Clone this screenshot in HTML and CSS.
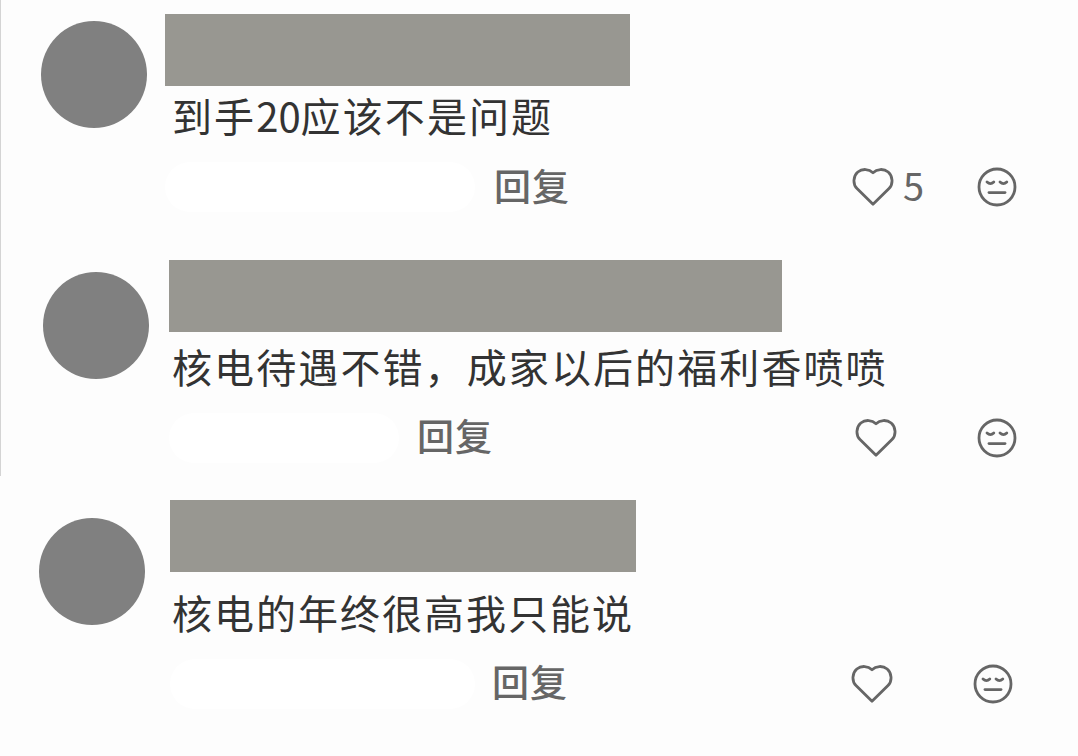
FILE: index.html
```html
<!DOCTYPE html>
<html lang="zh-CN">
<head>
    <meta charset="UTF-8">
    <title>评论</title>
    <link rel="stylesheet" href="styles.css">
</head>
<body>
    <!-- shared icons -->
    <svg class="sprite">
        <symbol id="heart" viewBox="0 0 42 38">
            <path d="M21 36.300L5 20.600C.5 16 1.200 8 5.800 4C10.500.3 17 .9 21 4.800C25 .9 31.500.3 36.200 4C40.800 8 41.500 16 37 20.600Z"/>
        </symbol>
        <symbol id="face" viewBox="0 0 40 40">
            <circle cx="20" cy="20" r="18"/>
            <path d="M10 15Q13.400 18.200 16.800 15M23 15Q26.400 18.200 29.800 15"/>
            <path d="M12 25.600H28"/>
        </symbol>
    </svg>

    <div class="comments">
        <div class="comment first">
            <div class="avatar"></div>
            <div class="content">
                <div class="name"></div>
                <p class="text">到手<span class="num">20</span>应该不是问题</p>
                <div class="actions">
                    <span class="time"></span>
                    <span class="reply">回复</span>
                    <span class="like"><svg class="heart"><use href="#heart"/></svg><span class="count">5</span></span>
                    <svg class="face"><use href="#face"/></svg>
                </div>
            </div>
        </div>

        <div class="comment second">
            <div class="avatar"></div>
            <div class="content">
                <div class="name"></div>
                <p class="text">核电待遇不错，成家以后的福利香喷喷</p>
                <div class="actions">
                    <span class="time"></span>
                    <span class="reply">回复</span>
                    <span class="like"><svg class="heart"><use href="#heart"/></svg></span>
                    <svg class="face"><use href="#face"/></svg>
                </div>
            </div>
        </div>

        <div class="comment third">
            <div class="avatar"></div>
            <div class="content">
                <div class="name"></div>
                <p class="text">核电的年终很高我只能说</p>
                <div class="actions">
                    <span class="time"></span>
                    <span class="reply">回复</span>
                    <span class="like"><svg class="heart"><use href="#heart"/></svg></span>
                    <svg class="face"><use href="#face"/></svg>
                </div>
            </div>
        </div>
    </div>
</body>
</html>
```
FILE: styles.css
```css
* {
    box-sizing: border-box;
}
body {
    margin: 0;
    background-color: #fdfdfd;
    font-family: "Noto Sans CJK SC", sans-serif;
    overflow: hidden;
}
.sprite {
    display: none;
}
.comments {
    width: 1078px;
    height: 756px;
    background: linear-gradient(#d4d4d4, #d4d4d4) no-repeat 0 0 / 1px 476px;
}
.comment {
    display: flex;
    align-items: flex-start;
}
.first {
    height: 251px;
    padding: 14px 0 0 41px;
}
.second {
    height: 246px;
    padding: 9px 0 0 43px;
}
.third {
    padding: 3px 0 0 39px;
}
.avatar {
    flex: none;
    width: 106px;
    height: 107px;
    margin-top: 7px;
    border-radius: 50%;
    background-color: #808080;
}
.second .avatar {
    margin-top: 12px;
}
.third .avatar {
    margin-top: 18px;
}
.content {
    flex: 1;
    padding-left: 18px;
}
.second .content {
    padding-left: 20px;
}
.third .content {
    padding-left: 25px;
}
.name {
    width: 465px;
    height: 72px;
    background-color: #989791;
}
.second .name {
    width: 613px;
}
.third .name {
    width: 466px;
}
.text {
    margin: 0 0 0 7px;
    height: 60px;
    line-height: 58px;
    font-size: 40px;
    letter-spacing: 2.1px;
    color: #333;
    white-space: nowrap;
}
.second .text {
    margin: 5px 0 0 3px;
}
.third .text {
    margin: 11px 0 0 2px;
    letter-spacing: 2px;
}
.num {
    letter-spacing: 0;
}

/* bottom row */
.actions {
    display: flex;
    align-items: center;
    height: 58px;
    margin-top: 12px;
    color: #666;
}
.second .actions, .third .actions {
    height: 57px;
}
.time {
    width: 310px;
    height: 50px;
    border-radius: 25px;
    background-color: #fff;
}
.second .time {
    width: 230px;
}
.third .time {
    width: 305px;
}
.reply {
    width: 77px;
    margin-left: 19px;
    font-size: 37px;
    font-weight: 500;
    letter-spacing: 1px;
    line-height: 54px;
    height: 59px;
    white-space: nowrap;
}
.second .reply {
    margin-left: 18px;
}
.third .reply {
    margin-left: 17px;
}
.like {
    display: flex;
    align-items: center;
    width: 125px;
    margin-left: 281px;
}
.second .like {
    width: 122px;
    margin-left: 361px;
}
.third .like {
    width: 122px;
    margin-left: 282px;
}
.count {
    height: 59px;
    margin-left: 9px;
    font-size: 38px;
    line-height: 53px;
}
.heart, .face {
    flex: none;
    fill: none;
    stroke: #666;
    stroke-width: 2.800;
    stroke-linecap: round;
    stroke-linejoin: round;
}
.heart {
    width: 42px;
    height: 38px;
}
.face {
    width: 40px;
    height: 40px;
}
```
